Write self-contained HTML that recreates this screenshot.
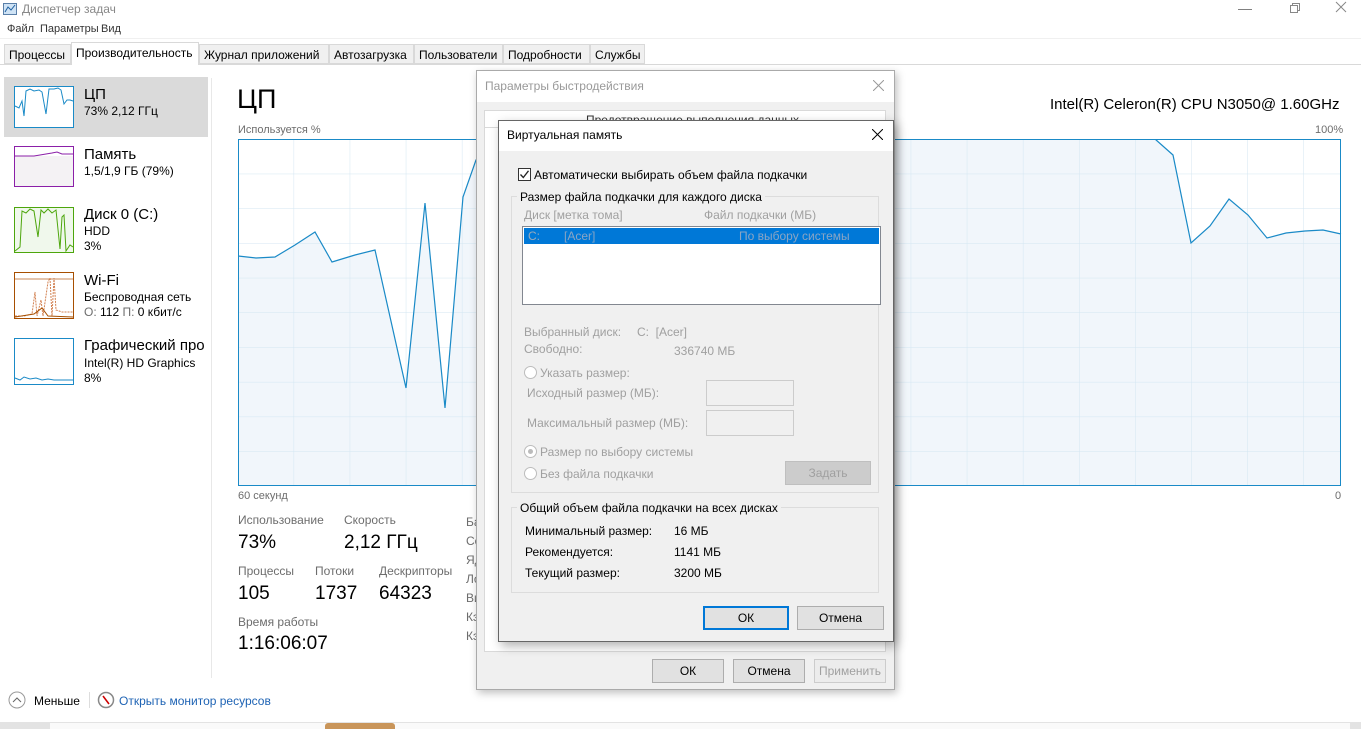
<!DOCTYPE html>
<html><head><meta charset="utf-8"><style>
*{margin:0;padding:0;box-sizing:border-box}
body{width:1361px;height:729px;overflow:hidden;background:#fff;font-family:"Liberation Sans",sans-serif;font-size:12px;color:#000;position:relative}
.a{position:absolute;white-space:nowrap}
.g{color:#6d6d6d}
.d{color:#a0a0a0}
.tab{position:absolute;top:44px;height:20px;border:1px solid #d9d9d9;background:#f0f0f0;font-size:12px;padding:3px 4px 0}
.btn{position:absolute;height:24px;border:1px solid #adadad;background:#e1e1e1;text-align:center;line-height:22px;font-size:12px}
.rad{position:absolute;width:13px;height:13px;border:1px solid #bcbcbc;border-radius:50%;background:#fff}
</style></head><body>
<!-- title -->
<svg class="a" style="left:3px;top:3px" width="14" height="12"><rect x="0.5" y="0.5" width="13" height="11" fill="#cfe3f5" stroke="#5a7fa8"/><polyline points="2,9 5,4 8,7 12,2" fill="none" stroke="#1c5fa0"/></svg>
<div class="a g" style="left:22px;top:2px;font-size:12px;color:#888">Диспетчер задач</div>
<div class="a" style="left:1238px;top:0;color:#777;font-size:14px">—</div>
<svg class="a" style="left:1289px;top:2px" width="12" height="12"><rect x="1.5" y="3.5" width="7" height="7" fill="none" stroke="#888"/><path d="M3.5 3.5V1.5H10.5V8.5H8.5" fill="none" stroke="#888"/></svg>
<svg class="a" style="left:1335px;top:1px" width="12" height="12"><path d="M1 1L11 11M11 1L1 11" stroke="#888"/></svg>
<div class="a" style="left:7px;top:23px;color:#333;font-size:11px">Файл</div>
<div class="a" style="left:40px;top:23px;color:#333;font-size:11px">Параметры</div>
<div class="a" style="left:101px;top:23px;color:#333;font-size:11px">Вид</div>
<div class="a" style="left:0;top:38px;width:1361px;height:1px;background:#f0f0f0"></div>
<div class="a" style="left:0;top:64px;width:1361px;height:1px;background:#d9d9d9"></div>
<div class="tab" style="left:4px;width:67px">Процессы</div>
<div class="tab" style="left:71px;top:42px;height:23px;width:128px;background:#fff;border-bottom:none">Производительность</div>
<div class="tab" style="left:199px;width:130px">Журнал приложений</div>
<div class="tab" style="left:329px;width:85px">Автозагрузка</div>
<div class="tab" style="left:414px;width:89px">Пользователи</div>
<div class="tab" style="left:503px;width:87px">Подробности</div>
<div class="tab" style="left:590px;width:55px">Службы</div>

<!-- sidebar -->
<div class="a" style="left:4px;top:77px;width:204px;height:60px;background:#dadada"></div>
<div class="a" style="left:211px;top:78px;width:1px;height:600px;background:#e8e8e8"></div>
<svg class="a" style="left:14px;top:86px" width="60" height="42"><rect x="0.5" y="0.5" width="59" height="41" fill="#fff" stroke="#1a8ac7"/><polyline points="1,20 5,22 8,15 10,30 12,5 16,3 20,5 25,4 28,6 32,28 35,3 40,3 44,2 47,4 50,18 53,14 56,14 59,15" fill="none" stroke="#1a8ac7"/></svg>
<div class="a" style="left:84px;top:86px;font-size:15px">ЦП</div>
<div class="a" style="left:84px;top:104px">73% 2,12 ГГц</div>
<svg class="a" style="left:14px;top:146px" width="60" height="41"><rect x="0.5" y="0.5" width="59" height="40" fill="#f4f2f4" stroke="#8b1fa8"/><rect x="1" y="1" width="58" height="9" fill="#fff"/><polyline points="1,10 20,10 26,9 32,8 38,7 43,6 48,8 59,8" fill="none" stroke="#8b1fa8"/></svg>
<div class="a" style="left:84px;top:146px;font-size:15px">Память</div>
<div class="a" style="left:84px;top:164px">1,5/1,9 ГБ (79%)</div>
<svg class="a" style="left:14px;top:207px" width="60" height="46"><rect x="0.5" y="0.5" width="59" height="45" fill="#f0f8ec" stroke="#4da60c"/><polyline points="1,44 6,40 8,4 12,6 16,2 20,4 24,30 27,3 30,6 34,2 38,6 42,3 46,42 48,10 50,8 52,44 56,38 59,40" fill="none" stroke="#4da60c"/></svg>
<div class="a" style="left:84px;top:206px;font-size:15px">Диск 0 (C:)</div>
<div class="a" style="left:84px;top:224px">HDD</div>
<div class="a" style="left:84px;top:239px">3%</div>
<svg class="a" style="left:14px;top:272px" width="60" height="47"><rect x="0.5" y="0.5" width="59" height="46" fill="#fff" stroke="#a74f01"/><line x1="1" y1="7" x2="59" y2="7" stroke="#c8895a"/><polyline points="1,44 10,44 18,42 21,20 23,44 27,28 29,44 34,10 36,6 38,44 40,6 42,38 48,40 59,40" fill="none" stroke="#d28050" stroke-dasharray="2,1"/><polyline points="1,45 20,42 28,36 34,44 59,45" fill="none" stroke="#a74f01"/></svg>
<div class="a" style="left:84px;top:272px;font-size:15px">Wi-Fi</div>
<div class="a" style="left:84px;top:290px">Беспроводная сеть</div>
<div class="a" style="left:84px;top:305px"><span class="g">О:</span> 112 <span class="g">П:</span> 0 кбит/с</div>
<svg class="a" style="left:14px;top:338px" width="60" height="47"><rect x="0.5" y="0.5" width="59" height="46" fill="#fff" stroke="#1a8ac7"/><polyline points="1,40 6,42 10,39 16,41 22,40 28,42 34,41 40,42 46,42 59,42" fill="none" stroke="#1a8ac7"/></svg>
<div class="a" style="left:84px;top:337px;font-size:15px">Графический про</div>
<div class="a" style="left:84px;top:356px">Intel(R) HD Graphics</div>
<div class="a" style="left:84px;top:371px">8%</div>

<!-- main -->
<div class="a" style="left:237px;top:84px;font-size:27px">ЦП</div>
<div class="a" style="left:1050px;top:96px;font-size:15px">Intel(R) Celeron(R) CPU N3050@ 1.60GHz</div>
<div class="a g" style="left:238px;top:124px;font-size:11px">Используется %</div>
<div class="a g" style="left:1315px;top:124px;font-size:11px">100%</div>
<svg class="a" style="left:238px;top:139px" width="1104" height="348">
<defs><pattern id="gr" width="56.1" height="34.7" patternUnits="userSpaceOnUse" x="-0.5"><path d="M0 0V34.7M0 0H56.1" fill="none" stroke="#d3e6f2"/></pattern></defs>
<rect x="0" y="0" width="1103" height="347" fill="#fff"/>
<polygon points="0,117 18,119 37,118 57,106 77,93 94,123 117,116 137,111 168,249 187,64 207,269 225,58 238,21 260,0 917,0 935,16 953,104 972,87 991,60 1010,76 1029,99 1048,94 1067,92 1085,91 1103,95 1103,347 0,347" fill="#f1f6fb"/>
<rect x="0" y="0" width="1103" height="347" fill="url(#gr)"/>
<polyline points="0,117 18,119 37,118 57,106 77,93 94,123 117,116 137,111 168,249 187,64 207,269 225,58 238,21 260,0 917,0 935,16 953,104 972,87 991,60 1010,76 1029,99 1048,94 1067,92 1085,91 1103,95" fill="none" stroke="#1a8ac7" stroke-width="1.2"/>
<rect x="0.5" y="0.5" width="1102" height="346" fill="none" stroke="#1a8ac7"/>
</svg>
<div class="a g" style="left:238px;top:490px;font-size:11px">60 секунд</div>
<div class="a g" style="left:1335px;top:490px;font-size:11px">0</div>
<div class="a g" style="left:238px;top:513px;font-size:12px">Использование</div>
<div class="a g" style="left:344px;top:513px;font-size:12px">Скорость</div>
<div class="a" style="left:238px;top:532px;font-size:19px">73%</div>
<div class="a" style="left:344px;top:532px;font-size:19px">2,12 ГГц</div>
<div class="a g" style="left:238px;top:564px">Процессы</div>
<div class="a g" style="left:315px;top:564px">Потоки</div>
<div class="a g" style="left:379px;top:564px">Дескрипторы</div>
<div class="a" style="left:238px;top:583px;font-size:19px">105</div>
<div class="a" style="left:315px;top:583px;font-size:19px">1737</div>
<div class="a" style="left:379px;top:583px;font-size:19px">64323</div>
<div class="a g" style="left:238px;top:615px">Время работы</div>
<div class="a" style="left:238px;top:633px;font-size:19px">1:16:06:07</div>
<div class="a g" style="left:466px;top:513px;line-height:19px;white-space:normal;width:12px;overflow:hidden">Ба Со Яд Ло Ви Кэ Кэ</div>

<!-- footer -->
<svg class="a" style="left:8px;top:691px" width="18" height="18"><circle cx="9" cy="9" r="8" fill="none" stroke="#999"/><path d="M5 11L9 7L13 11" fill="none" stroke="#666"/></svg>
<div class="a" style="left:34px;top:694px">Меньше</div>
<div class="a" style="left:89px;top:692px;width:1px;height:16px;background:#ddd"></div>
<svg class="a" style="left:97px;top:691px" width="18" height="18"><circle cx="9" cy="9" r="7.5" fill="#fff" stroke="#888" stroke-width="1.5"/><path d="M6 5L12 13" stroke="#c00" stroke-width="1.6"/></svg>
<div class="a" style="left:119px;top:694px;color:#1e63b4">Открыть монитор ресурсов</div>
<div class="a" style="left:0;top:722px;width:1361px;height:7px;background:#e3e3e3"></div>
<div class="a" style="left:50px;top:723px;width:1300px;height:6px;background:#fafafa"></div>
<div class="a" style="left:325px;top:723px;width:70px;height:6px;background:#c9955a;border-radius:3px 3px 0 0"></div>

<!-- outer dialog -->
<div class="a" style="left:476px;top:70px;width:419px;height:620px;background:#f0f0f0;border:1px solid #aaa;box-shadow:2px 3px 8px rgba(0,0,0,.25)"></div>
<div class="a" style="left:477px;top:71px;width:417px;height:31px;background:#fff"></div>
<div class="a" style="left:485px;top:79px;color:#999">Параметры быстродействия</div>
<svg class="a" style="left:873px;top:80px" width="11" height="11"><path d="M0 0L11 11M11 0L0 11" stroke="#999"/></svg>
<div class="a" style="left:484px;top:110px;width:402px;height:18px;border:1px solid #d9d9d9;background:#fff"></div>
<div class="a" style="left:586px;top:113px;color:#333">Предотвращение выполнения данных</div>
<div class="a" style="left:484px;top:127px;width:402px;height:525px;background:#fff;border:1px solid #d9d9d9"></div>
<div class="btn" style="left:652px;top:659px;width:72px">ОК</div>
<div class="btn" style="left:733px;top:659px;width:72px">Отмена</div>
<div class="btn" style="left:814px;top:659px;width:72px;color:#a0a0a0;border-color:#ccc;background:#ececec">Применить</div>

<!-- inner dialog -->
<div class="a" style="left:498px;top:120px;width:396px;height:522px;background:#f0f0f0;border:1px solid #666;box-shadow:3px 4px 10px rgba(0,0,0,.3)"></div>
<div class="a" style="left:499px;top:121px;width:394px;height:30px;background:#fff"></div>
<div class="a" style="left:507px;top:128px">Виртуальная память</div>
<svg class="a" style="left:872px;top:129px" width="11" height="11"><path d="M0 0L11 11M11 0L0 11" stroke="#000"/></svg>
<div class="a" style="left:518px;top:168px;width:13px;height:13px;border:1px solid #333;background:#fff"></div>
<svg class="a" style="left:519px;top:169px" width="11" height="11"><path d="M1.5 5.5L4.3 8.5L9.5 1.8" fill="none" stroke="#222" stroke-width="1.3"/></svg>
<div class="a" style="left:534px;top:168px">Автоматически выбирать объем файла подкачки</div>
<div class="a" style="left:511px;top:196px;width:368px;height:297px;border:1px solid #dcdcdc"></div>
<div class="a" style="left:517px;top:190px;background:#f0f0f0;padding:0 3px">Размер файла подкачки для каждого диска</div>
<div class="a d" style="left:524px;top:208px">Диск [метка тома]</div>
<div class="a d" style="left:704px;top:208px">Файл подкачки (МБ)</div>
<div class="a" style="left:522px;top:226px;width:359px;height:79px;background:#fff;border:1px solid #828790"></div>
<div class="a" style="left:524px;top:228px;width:355px;height:16px;background:#0078d7"></div>
<div class="a" style="left:528px;top:229px;color:#9ab;">C:</div>
<div class="a" style="left:564px;top:229px;color:#8aa5c4">[Acer]</div>
<div class="a" style="left:739px;top:229px;color:#8aa5c4">По выбору системы</div>
<div class="a d" style="left:524px;top:325px">Выбранный диск:</div>
<div class="a d" style="left:637px;top:325px">C:&nbsp; [Acer]</div>
<div class="a d" style="left:524px;top:342px">Свободно:</div>
<div class="a d" style="left:674px;top:344px">336740 МБ</div>
<div class="rad" style="left:524px;top:366px"></div>
<div class="a d" style="left:540px;top:366px">Указать размер:</div>
<div class="a d" style="left:527px;top:386px">Исходный размер (МБ):</div>
<div class="a" style="left:706px;top:380px;width:88px;height:26px;border:1px solid #ccc;background:#f0f0f0"></div>
<div class="a d" style="left:527px;top:416px">Максимальный размер (МБ):</div>
<div class="a" style="left:706px;top:410px;width:88px;height:26px;border:1px solid #ccc;background:#f0f0f0"></div>
<div class="rad" style="left:524px;top:445px"></div>
<div class="a" style="left:528px;top:449px;width:5px;height:5px;border-radius:50%;background:#bbb"></div>
<div class="a d" style="left:540px;top:445px">Размер по выбору системы</div>
<div class="rad" style="left:524px;top:467px"></div>
<div class="a d" style="left:540px;top:467px">Без файла подкачки</div>
<div class="btn" style="left:785px;top:461px;width:86px;color:#a0a0a0;border-color:#bfbfbf;background:#cccccc">Задать</div>
<div class="a" style="left:511px;top:507px;width:368px;height:86px;border:1px solid #dcdcdc"></div>
<div class="a" style="left:517px;top:501px;background:#f0f0f0;padding:0 3px">Общий объем файла подкачки на всех дисках</div>
<div class="a" style="left:525px;top:524px">Минимальный размер:</div>
<div class="a" style="left:674px;top:524px">16 МБ</div>
<div class="a" style="left:525px;top:545px">Рекомендуется:</div>
<div class="a" style="left:674px;top:545px">1141 МБ</div>
<div class="a" style="left:525px;top:566px">Текущий размер:</div>
<div class="a" style="left:674px;top:566px">3200 МБ</div>
<div class="btn" style="left:703px;top:606px;width:86px;border:2px solid #0078d7;line-height:20px">ОК</div>
<div class="btn" style="left:797px;top:606px;width:87px">Отмена</div>
</body></html>
